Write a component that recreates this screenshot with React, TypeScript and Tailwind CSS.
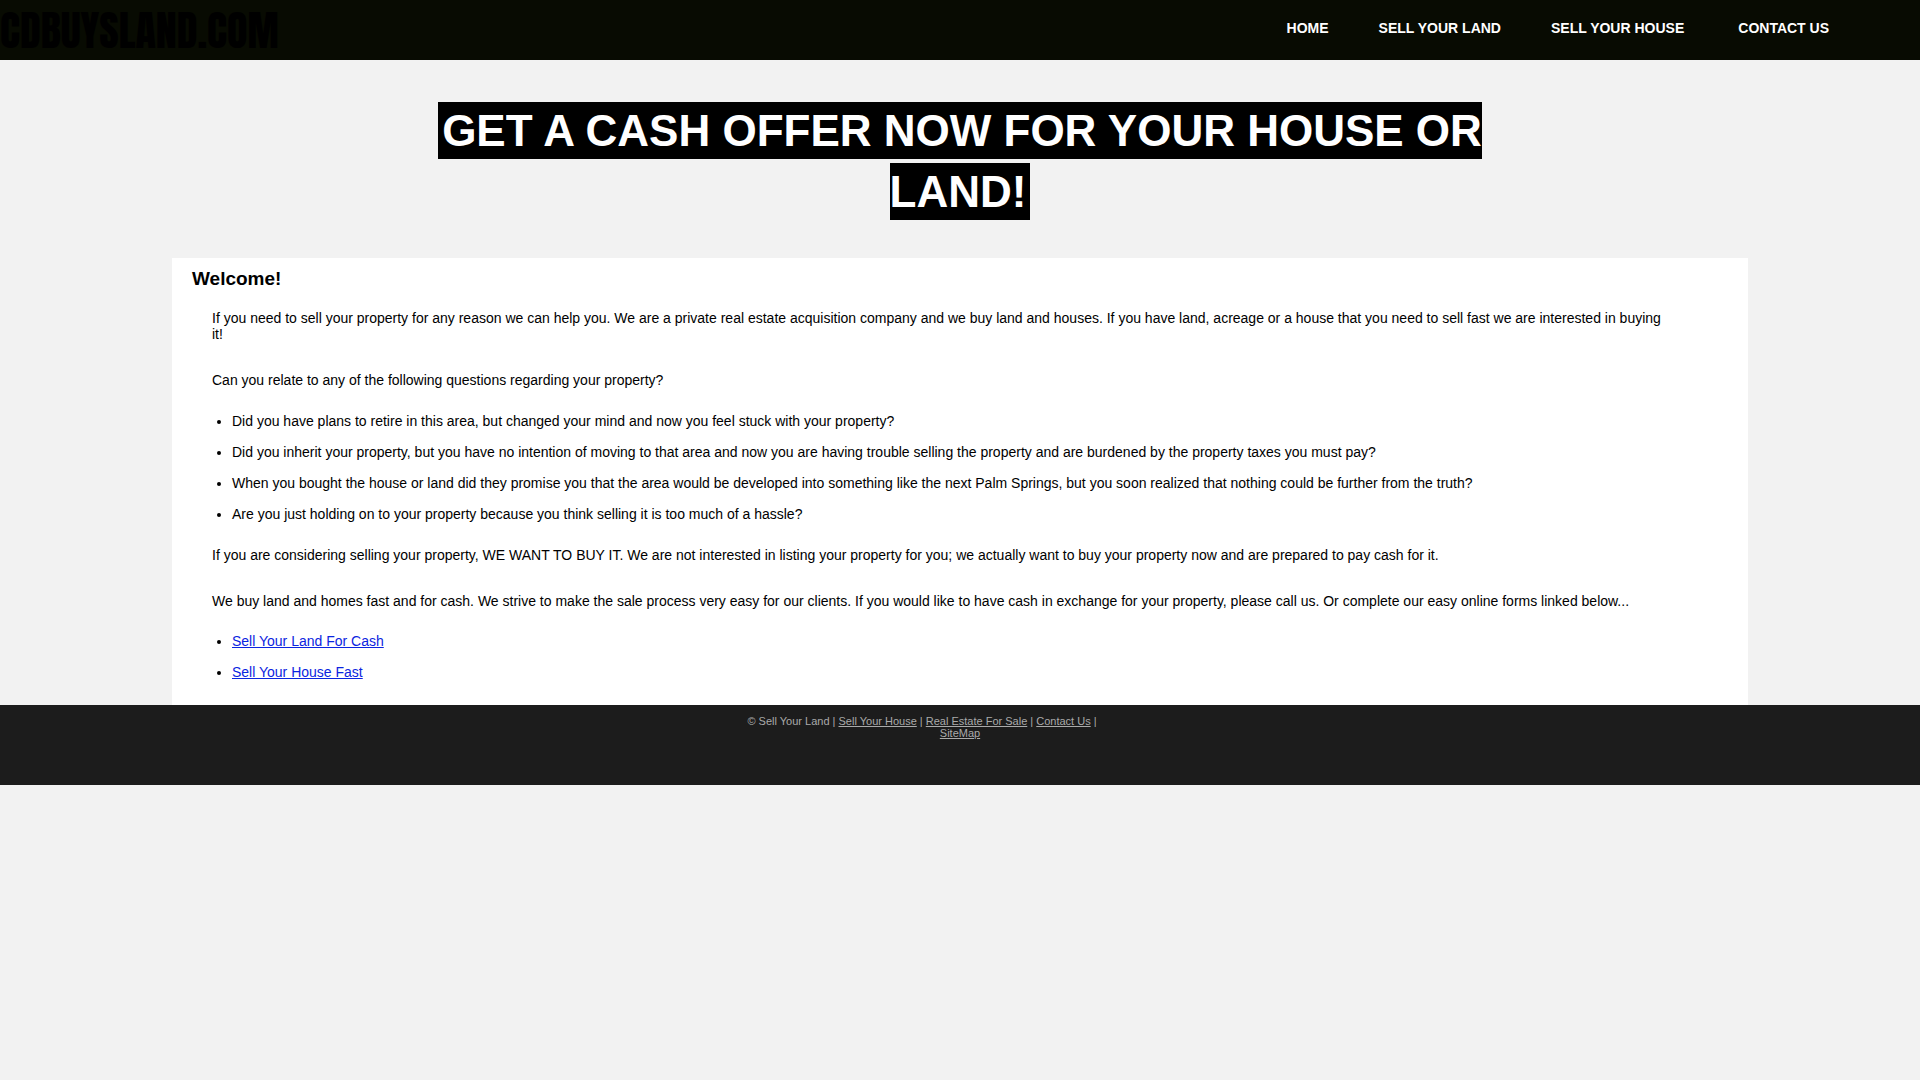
const navLinks = [
    { label: "HOME", href: "#home" },
    { label: "SELL YOUR LAND", href: "#land" },
    { label: "SELL YOUR HOUSE", href: "#house" },
];

const questions = [
    "Did you have plans to retire in this area, but changed your mind and now you feel stuck with your property?",
    "Did you inherit your property, but you have no intention of moving to that area and now you are having trouble selling the property and are burdened by the property taxes you must pay?",
    "When you bought the house or land did they promise you that the area would be developed into something like the next Palm Springs, but you soon realized that nothing could be further from the truth?",
    "Are you just holding on to your property because you think selling it is too much of a hassle?",
];

function Header() {
    return (
        <header className="flex h-[60px] items-center justify-between bg-[#080b02]">
            <a href="#home" className="pt-0.5 font-[Anton,Impact,sans-serif] text-[42px] leading-none font-normal text-black">CDBUYSLAND.COM</a>
            <nav className="flex gap-[50px] pr-[91px] pb-1 text-sm font-bold text-white">
                {navLinks.map((link) => (
                    <a key={link.label} href={link.href}>{link.label}</a>
                ))}
                <a href="#contact" className="pl-1">CONTACT US</a>
            </nav>
        </header>
    );
}

function Footer() {
    return (
        <footer className="h-20 bg-[#1c1c1c] pt-[10px] text-center text-[11px] leading-3 text-[#aaaaaa]">
            <p className="pr-19">
                © Sell Your Land | <a href="#house" className="underline">Sell Your House</a> | <a href="#sale" className="underline">Real Estate For Sale</a> | <a href="#contact" className="underline">Contact Us</a> |
            </p>
            <p><a href="#sitemap" className="underline">SiteMap</a></p>
        </footer>
    );
}

export default function App() {
    return (
        <div className="min-h-screen bg-[#f2f2f2] font-['Liberation_Sans',Arial,sans-serif] text-black">
            <Header />

            <h1 className="mx-auto max-w-[1100px] pt-10 pb-9 text-center text-[44px] leading-[61px] font-bold text-white">
                <span className="bg-black px-1 py-1">GET A CASH OFFER NOW FOR YOUR HOUSE OR LAND!</span>
            </h1>

            <main className="mx-[172px] bg-white px-5 pt-[10px] pb-[25px] text-sm leading-4">
                <h2 className="text-[19px] leading-[22px] font-bold">Welcome!</h2>
                <div className="pr-15 pl-5">
                    <p className="mt-5">
                        If you need to sell your property for any reason we can help you. We are a private real estate acquisition company and we buy land and houses. If you have land, acreage or a house that you need to sell fast we are interested in buying it!
                    </p>
                    <p className="mt-[30px]">Can you relate to any of the following questions regarding your property?</p>
                    <ul className="mt-[25px] flex list-disc flex-col gap-[15px] pl-5">
                        {questions.map((question) => (
                            <li key={question}>{question}</li>
                        ))}
                    </ul>
                    <p className="mt-[25px]">
                        If you are considering selling your property, WE WANT TO BUY IT. We are not interested in listing your property for you; we actually want to buy your property now and are prepared to pay cash for it.
                    </p>
                    <p className="mt-[30px]">
                        We buy land and homes fast and for cash. We strive to make the sale process very easy for our clients. If you would like to have cash in exchange for your property, please call us. Or complete our easy online forms linked below...
                    </p>
                    <ul className="mt-6 flex list-disc flex-col gap-[15px] pl-5">
                        <li><a href="#land" className="text-[#0b24e0] underline">Sell Your Land For Cash</a></li>
                        <li><a href="#house" className="text-[#0b24e0] underline">Sell Your House Fast</a></li>
                    </ul>
                </div>
            </main>

            <Footer />
        </div>
    );
}
